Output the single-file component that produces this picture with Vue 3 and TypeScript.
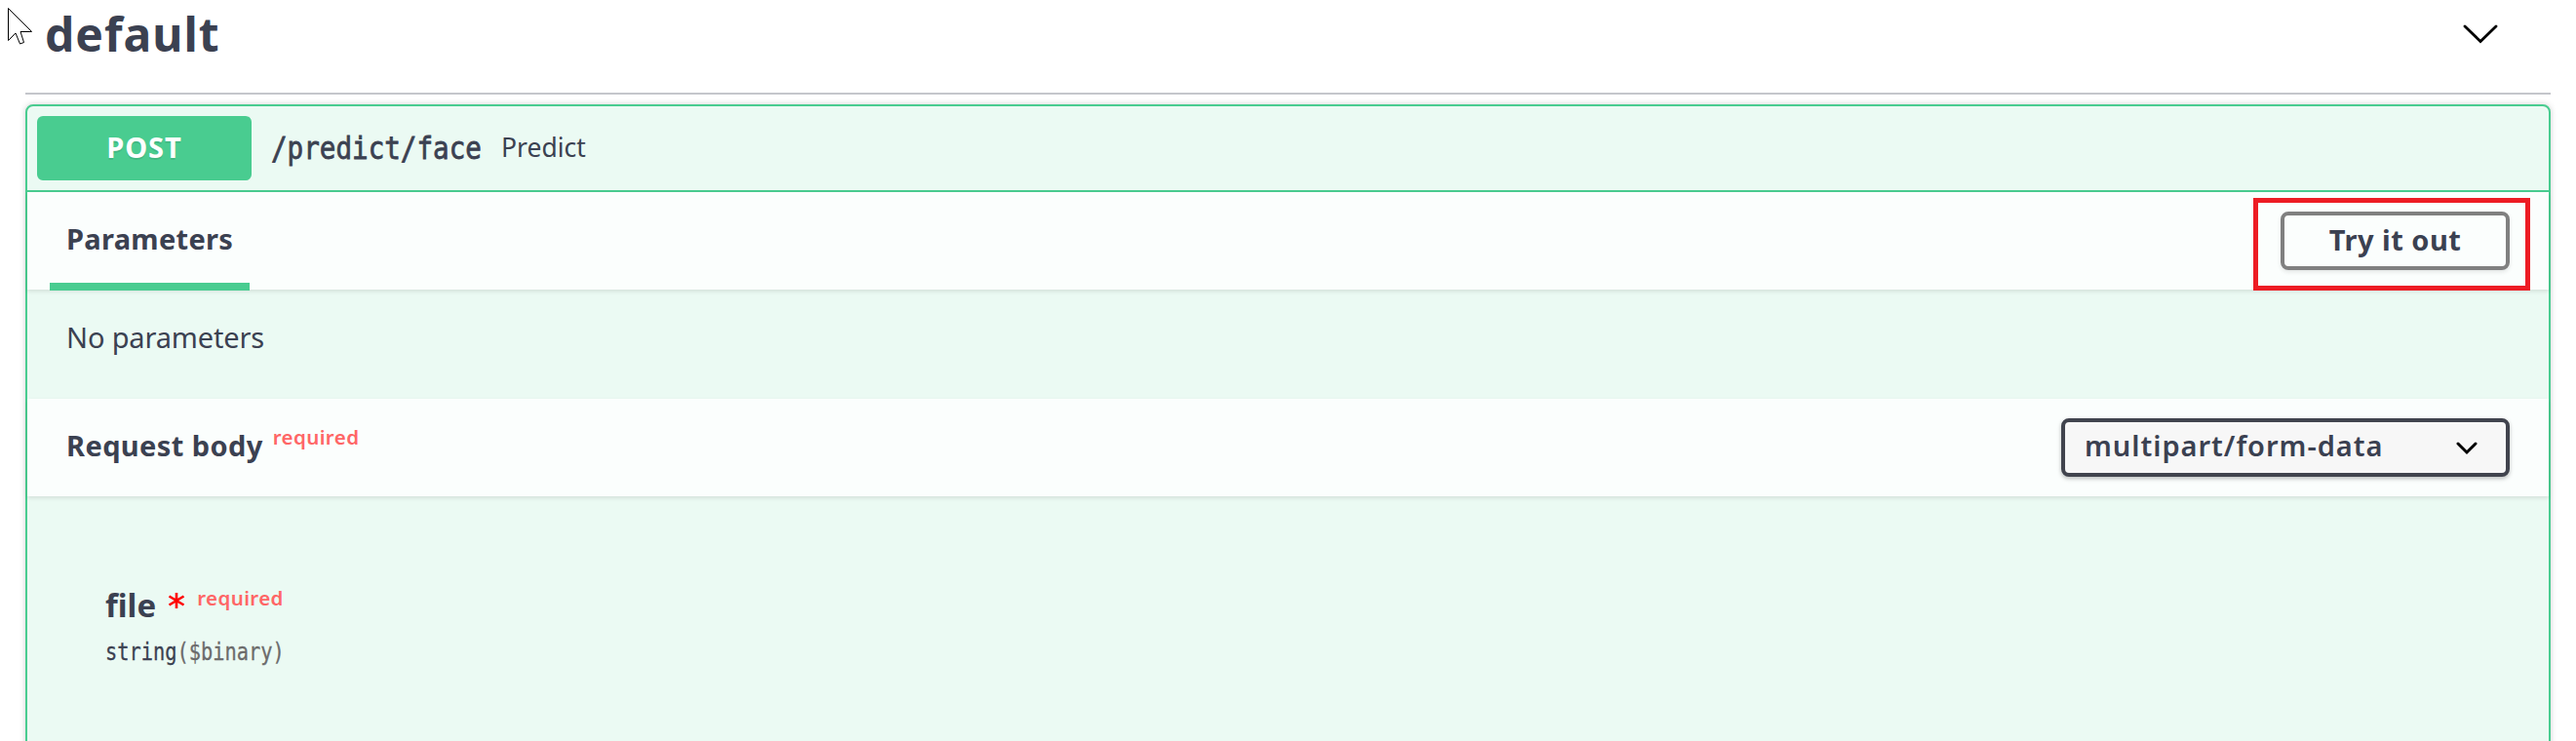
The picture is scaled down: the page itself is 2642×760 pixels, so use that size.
<script setup lang="ts">
interface Operation {
  method: string
  path: string
  summary: string
}

const tag: string = 'default'
const operation: Operation = { method: 'POST', path: '/predict/face', summary: 'Predict' }
const contentType: string = 'multipart/form-data'
</script>

<template>
  <main class="page">
    <header class="tag">
      <svg class="cursor" width="28" height="42" viewBox="0 0 28 42">
        <path d="M1.5 2.5 V35.5 L9 28 L13.5 39 L17.5 37.5 L14 26.5 H25.5 Z" fill="#fff" stroke="#000" stroke-width="1" />
      </svg>
      <h3 class="tag-name">{{ tag }}</h3>
      <svg class="tag-arrow" width="36" height="20" viewBox="0 0 36 20">
        <path d="M2 2 L18 17.5 L34 2" fill="none" stroke="#000" stroke-width="2.8" stroke-linecap="round" />
      </svg>
    </header>

    <section class="block">
      <div class="summary">
        <span class="method">{{ operation.method }}</span>
        <span class="path"><span class="path-text">{{ operation.path }}</span></span>
        <span class="desc">{{ operation.summary }}</span>
      </div>

      <div class="bar">
        <div class="tab"><h4 class="title params">Parameters</h4></div>
        <div class="callout"><button class="try">Try it out</button></div>
      </div>
      <div class="empty"><p class="none">No parameters</p></div>

      <div class="bar body-bar">
        <h4 class="title reqbody">Request body</h4>
        <span class="required">required</span>
        <div class="select">
          <span class="select-text">{{ contentType }}</span>
          <svg class="select-arrow" width="22" height="14" viewBox="0 0 22 14">
            <path d="M2 2 L11 11 L20 2" fill="none" stroke="#000" stroke-width="3" stroke-linecap="round" />
          </svg>
        </div>
      </div>

      <div class="field">
        <div class="field-name">
          <span class="name">file</span>
          <svg class="star" width="18" height="18" viewBox="0 0 18 18">
            <path d="M9 1 V17 M1.5 4.5 L16.5 13.5 M16.5 4.5 L1.5 13.5" stroke="#f00" stroke-width="2.6" />
          </svg>
          <span class="required">required</span>
        </div>
        <div class="type">string<span class="format">($binary)</span></div>
      </div>
    </section>
  </main>
</template>

<style>
body {
  margin: 0;
  background: #fff;
  overflow: hidden;
}
</style>

<style scoped>
* {
  box-sizing: border-box;
  margin: 0;
}
.page {
  height: 760px;
  overflow: hidden;
  padding: 0 26px;
  font-family: "Noto Sans", "Open Sans", sans-serif;
  color: #3b4151;
  white-space: nowrap;
}
.tag {
  position: relative;
  display: flex;
  align-items: flex-start;
  justify-content: space-between;
  height: 97px;
  padding: 0 54px 0 20px;
  border-bottom: 2px solid #c4c6cb;
}
.cursor {
  position: absolute;
  left: -19px;
  top: 6px;
}
.tag-name {
  font-size: 48px;
  line-height: 70px;
  font-weight: 700;
  letter-spacing: 1px;
}
.tag-arrow {
  margin-top: 25px;
}
.block {
  height: 700px;
  margin-top: 10px;
  border: 2px solid #49cc90;
  border-radius: 8px;
  background: #ebfaf3;
  box-shadow: 0 0 6px rgba(0, 0, 0, 0.19);
}
.summary {
  display: flex;
  align-items: center;
  height: 88px;
  padding: 0 10px;
  border-bottom: 2px solid #49cc90;
}
.method {
  width: 220px;
  height: 66px;
  border-radius: 6px;
  background: #49cc90;
  color: #fff;
  font-size: 29px;
  line-height: 63px;
  font-weight: 700;
  letter-spacing: 0.9px;
  text-align: center;
  text-shadow: 0 2px 0 rgba(0, 0, 0, 0.1);
}
.path {
  width: 236px;
  margin-left: 20px;
}
.path-text {
  display: inline-block;
  font-family: "DejaVu Sans Mono", monospace;
  font-size: 32px;
  line-height: 66px;
  -webkit-text-stroke: 0.8px #3b4151;
  transform: scaleX(0.862);
  transform-origin: left;
}
.desc {
  font-size: 26.5px;
  line-height: 62px;
  margin-top: -2px;
}
.bar {
  display: flex;
  align-items: flex-start;
  height: 100px;
  padding: 0 19px 0 23px;
  background: #fbfefd;
  box-shadow: 0 2px 4px rgba(0, 0, 0, 0.1);
}
.tab {
  width: 205px;
  height: 101px;
  padding-left: 17px;
  border-bottom: 8px solid #49cc90;
}
.title {
  font-size: 29px;
  line-height: 96px;
  font-weight: 700;
}
.params {
  letter-spacing: 0.3px;
}
.reqbody {
  letter-spacing: 0.4px;
}
.callout {
  width: 284px;
  height: 95px;
  margin: 6px 0 0 auto;
  padding: 9px 16px 0 23px;
  border: 5px solid #ed1c24;
}
.try {
  display: block;
  width: 235px;
  height: 60px;
  padding: 0 0 3px;
  border: 4px solid #808080;
  border-radius: 8px;
  background: transparent;
  box-shadow: 0 2px 4px rgba(0, 0, 0, 0.1);
  color: #3b4151;
  font-family: inherit;
  font-size: 29px;
  line-height: 49px;
  font-weight: 700;
  letter-spacing: 0.5px;
}
.empty {
  height: 112px;
  padding: 0 40px;
}
.none {
  font-size: 29px;
  line-height: 98px;
  letter-spacing: -0.15px;
}
.body-bar {
  padding: 0 40px;
}
.required {
  color: #ff6666;
  font-size: 20.5px;
  font-weight: 600;
  letter-spacing: 0.4px;
}
.body-bar .required {
  margin-left: 10px;
  line-height: 79px;
}
.select {
  display: flex;
  align-items: flex-start;
  justify-content: space-between;
  width: 460px;
  height: 60px;
  margin: 20px 0 0 auto;
  padding: 0 29px 0 20px;
  border: 4px solid #41444e;
  border-radius: 8px;
  background: #f7f7f7;
  box-shadow: 0 2px 4px rgba(0, 0, 0, 0.25);
}
.select-text {
  font-size: 29px;
  line-height: 48px;
  font-weight: 600;
  letter-spacing: 0.98px;
}
.select-arrow {
  margin-top: 20px;
}
.field {
  padding: 86px 80px 0;
}
.field-name {
  display: flex;
  align-items: flex-start;
  height: 56px;
}
.name {
  font-size: 33px;
  line-height: 51px;
  font-weight: 700;
}
.star {
  margin: 12px 0 0 12px;
}
.field-name .required {
  margin-left: 12px;
  line-height: 37px;
}
.type {
  display: inline-block;
  font-family: "DejaVu Sans Mono", monospace;
  font-size: 24px;
  line-height: 37px;
  -webkit-text-stroke: 0.3px currentColor;
  transform: scaleX(0.848);
  transform-origin: left;
}
.format {
  color: #6b6b6b;
}
</style>
